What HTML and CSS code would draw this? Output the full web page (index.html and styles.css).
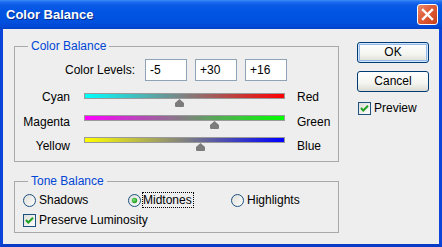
FILE: index.html
```html
<!DOCTYPE html>
<html>
<head>
<meta charset="utf-8">
<title>Color Balance</title>
<link rel="stylesheet" href="styles.css">
</head>
<body>
<div class="window">
  <div class="titlebar">
    <span class="title">Color Balance</span>
    <span class="close">
      <svg width="19" height="19" viewBox="0 0 19 19"><path d="M5 5 L14 14 M14 5 L5 14" stroke="#fff" stroke-width="2.4" stroke-linecap="square"/></svg>
    </span>
  </div>
  <div class="client">
    <div class="left">
      <div class="group cb">
        <div class="legend">Color Balance</div>
        <div class="levels">
          <span class="levels-label">Color Levels:</span>
          <span class="field">-5</span>
          <span class="field">+30</span>
          <span class="field">+16</span>
        </div>
        <div class="sliders">
          <div class="labs labs-l">
            <span>Cyan</span>
            <span>Magenta</span>
            <span>Yellow</span>
          </div>
          <div class="tracks">
            <div class="track cr">
              <svg class="thumb" style="left:47.5%" width="9" height="8" viewBox="0 0 9 8"><path d="M4.5 0 L9 4 L9 7 Q9 8 8 8 L1 8 Q0 8 0 7 L0 4 Z" fill="#7c7c7c"/></svg>
            </div>
            <div class="track mg">
              <svg class="thumb" style="left:65%" width="9" height="8" viewBox="0 0 9 8"><path d="M4.5 0 L9 4 L9 7 Q9 8 8 8 L1 8 Q0 8 0 7 L0 4 Z" fill="#7c7c7c"/></svg>
            </div>
            <div class="track yb">
              <svg class="thumb" style="left:58%" width="9" height="8" viewBox="0 0 9 8"><path d="M4.5 0 L9 4 L9 7 Q9 8 8 8 L1 8 Q0 8 0 7 L0 4 Z" fill="#7c7c7c"/></svg>
            </div>
          </div>
          <div class="labs labs-r">
            <span>Red</span>
            <span>Green</span>
            <span>Blue</span>
          </div>
        </div>
      </div>
      <div class="group tb">
        <div class="legend">Tone Balance</div>
        <div class="opts">
          <span class="opt w1">
            <svg class="radio" width="13" height="13" viewBox="0 0 13 13"><defs><linearGradient id="rg1" x1="0" y1="0" x2="1" y2="1"><stop offset="0" stop-color="#dcdcd7"/><stop offset="1" stop-color="#ffffff"/></linearGradient></defs><circle cx="6.5" cy="6.5" r="6" fill="url(#rg1)" stroke="#1c5180"/></svg>
            <span class="otext">Shadows</span>
          </span>
          <span class="opt w2">
            <svg class="radio" width="13" height="13" viewBox="0 0 13 13"><defs><linearGradient id="rg2" x1="0" y1="0" x2="1" y2="1"><stop offset="0" stop-color="#dcdcd7"/><stop offset="1" stop-color="#ffffff"/></linearGradient><radialGradient id="dot" cx="0.4" cy="0.4" r="0.6"><stop offset="0" stop-color="#7be37a"/><stop offset="1" stop-color="#1e9a1e"/></radialGradient></defs><circle cx="6.5" cy="6.5" r="6" fill="url(#rg2)" stroke="#1c5180"/><circle cx="6.5" cy="6.5" r="2.7" fill="url(#dot)"/></svg>
            <span class="otext focus">Midtones</span>
          </span>
          <span class="opt">
            <svg class="radio" width="13" height="13" viewBox="0 0 13 13"><defs><linearGradient id="rg3" x1="0" y1="0" x2="1" y2="1"><stop offset="0" stop-color="#dcdcd7"/><stop offset="1" stop-color="#ffffff"/></linearGradient></defs><circle cx="6.5" cy="6.5" r="6" fill="url(#rg3)" stroke="#1c5180"/></svg>
            <span class="otext">Highlights</span>
          </span>
        </div>
        <div class="opts">
          <span class="opt">
            <svg class="check" width="13" height="13" viewBox="0 0 13 13"><defs><linearGradient id="cg1" x1="0" y1="0" x2="1" y2="1"><stop offset="0" stop-color="#dcdcd7"/><stop offset="1" stop-color="#ffffff"/></linearGradient></defs><rect x="0.5" y="0.5" width="12" height="12" fill="url(#cg1)" stroke="#1c5180"/><path d="M3 6 L5.3 8.5 L10 3.8" fill="none" stroke="#21a121" stroke-width="2"/></svg>
            <span class="otext">Preserve Luminosity</span>
          </span>
        </div>
      </div>
    </div>
    <div class="right">
      <div class="btn default">OK</div>
      <div class="btn">Cancel</div>
      <div class="preview">
        <svg class="check" width="13" height="13" viewBox="0 0 13 13"><defs><linearGradient id="cg2" x1="0" y1="0" x2="1" y2="1"><stop offset="0" stop-color="#dcdcd7"/><stop offset="1" stop-color="#ffffff"/></linearGradient></defs><rect x="0.5" y="0.5" width="12" height="12" fill="url(#cg2)" stroke="#1c5180"/><path d="M3 6 L5.3 8.5 L10 3.8" fill="none" stroke="#21a121" stroke-width="2"/></svg>
        <span class="otext">Preview</span>
      </div>
    </div>
  </div>
</div>
</body>
</html>
```

FILE: styles.css
```css
html, body {
  margin: 0;
  padding: 0;
  background: #eeeeee;
}
.window {
  width: 442px;
  height: 247px;
  display: flex;
  flex-direction: column;
  font-family: "Liberation Sans", Arial, sans-serif;
  font-size: 12px;
  color: #000;
}
.titlebar {
  height: 29px;
  flex: none;
  display: flex;
  align-items: flex-start;
  background: linear-gradient(to bottom, #3c8cf8 0, #1d6cf0 2px, #0a5ae6 5px, #0055e3 12px, #0050de 22px, #0048d4 27px, #003fc4 29px);
}
.title {
  flex: 1;
  padding-left: 6px;
  line-height: 29px;
  color: #fff;
  font-weight: bold;
  font-size: 13px;
  text-shadow: 1px 1px 0 #0a2a8a;
}
.close {
  width: 19px;
  height: 19px;
  margin: 4px 4px 0 0;
  border: 1px solid #fff;
  border-radius: 3px;
  background: linear-gradient(135deg, #ea8a6a 0%, #e0603c 40%, #c8401a 100%);
  display: flex;
}
.client {
  flex: 1;
  display: flex;
  align-items: flex-start;
  border: 3px solid #0b44d9;
  border-top: none;
  border-bottom-color: #0a3bc4;
  background: #eeeeee;
  padding: 13px 0 0 11px;
}
.left {
  margin-top: 4px;
  width: 325px;
}
.group {
  border: 1px solid #a9a9a9;
}
.legend {
  width: max-content;
  margin: -8px 0 0 13px;
  padding: 0 3px;
  height: 14px;
  line-height: 14px;
  background: #eeeeee;
  color: #0046d5;
}
.cb {
  padding-bottom: 7px;
}
.levels {
  display: flex;
  margin-top: 6px;
  height: 22px;
  align-items: center;
}
.levels-label {
  width: 120px;
  text-align: right;
  margin-right: 10px;
}
.field {
  box-sizing: border-box;
  width: 42px;
  height: 22px;
  line-height: 20px;
  border: 1px solid #8ea3b8;
  background: #fff;
  padding-left: 4px;
  margin-right: 8px;
}
.sliders {
  display: flex;
  align-items: flex-start;
  height: 66px;
  margin-top: 7px;
}
.labs {
  display: flex;
  flex-direction: column;
  margin-top: -3px;
  line-height: 24.5px;
}
.labs-l {
  width: 55px;
  text-align: right;
}
.labs-r {
  margin-left: 12px;
}
.tracks {
  display: flex;
  flex-direction: column;
  margin-left: 14px;
}
.track {
  position: relative;
  box-sizing: border-box;
  width: 201px;
  height: 6px;
  margin: 5px 0 11px;
  border: 1px solid #9a9a9a;
}
.cr { background: linear-gradient(to right, #00ffff, #808080 50%, #ff0000); }
.mg { background: linear-gradient(to right, #ff00ff, #808080 50%, #00ff00); }
.yb { background: linear-gradient(to right, #ffff00, #808080 50%, #0000ff); }
.thumb {
  position: absolute;
  top: 5px;
  margin-left: -4.5px;
}
.tb {
  margin-top: 19px;
  padding-bottom: 4px;
}
.opts {
  display: flex;
  height: 16px;
  align-items: center;
  margin-top: 4px;
  padding-left: 8px;
}
.opt {
  display: flex;
  align-items: center;
}
.w1 { width: 105px; }
.w2 { width: 103px; }
.radio, .check {
  flex: none;
}
.otext {
  margin-left: 3px;
  line-height: 14px;
}
.focus {
  margin-left: 1px;
  border: 1px dotted #000;
  padding: 0 1px 0 0;
}
.right {
  margin-left: 18px;
  width: 72px;
}
.btn {
  box-sizing: border-box;
  width: 72px;
  height: 21px;
  line-height: 19px;
  text-align: center;
  border: 1px solid #003c74;
  border-radius: 3px;
  background: linear-gradient(to bottom, #ffffff 0%, #f4f4f0 60%, #dcdcd4 100%);
  margin-bottom: 8px;
}
.default {
  box-shadow: inset 0 0 0 1px #cee7ff, inset 0 0 0 2px #98b8ea;
}
.preview {
  display: flex;
  align-items: center;
  height: 16px;
  margin-top: 5px;
  margin-left: 1px;
}
```
